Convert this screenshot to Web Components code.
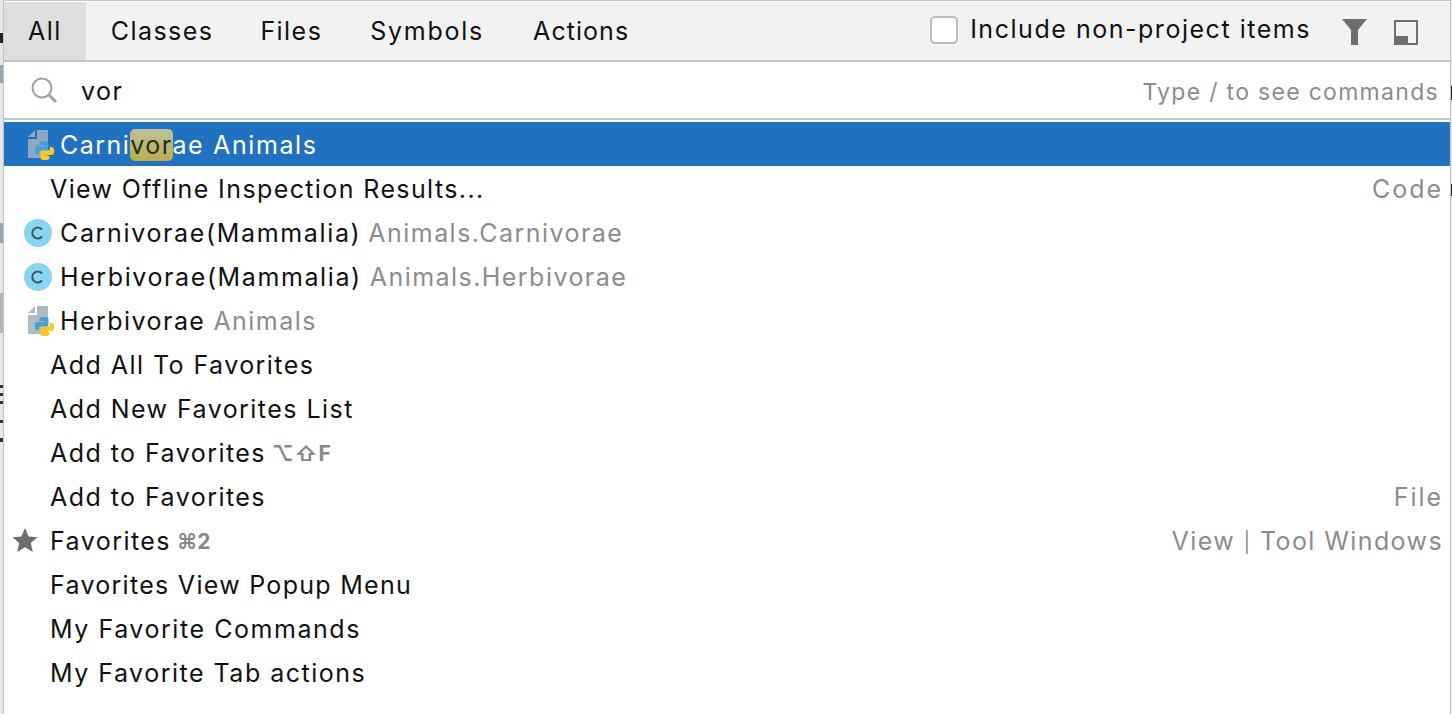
<!DOCTYPE html>
<html>
<head>
<meta charset="utf-8">
<style>
html, body { margin: 0; height: 100%; overflow: hidden; background: #e6e6e6; }
body { font-family: Inter, "Liberation Sans", sans-serif; }
</style>
</head>
<body>
<desk-backdrop></desk-backdrop>
<search-popup>
    <header-bar slot="head"></header-bar>
    <search-field slot="head"></search-field>
    <result-row selected icon="py"><b slot="name">Carni<mark-match>vor</mark-match>ae</b><span slot="hint" style="margin-left:9px;letter-spacing:1.6px">Animals</span></result-row>
    <result-row><b slot="name" style="letter-spacing:1.39px">View Offline Inspection Results...</b><span slot="side" style="letter-spacing:1.95px">Code</span></result-row>
    <result-row icon="class"><b slot="name" style="letter-spacing:1.65px">Carnivorae(Mammalia)</b><span slot="hint" style="margin-left:7px">Animals.Carnivorae</span></result-row>
    <result-row icon="class"><b slot="name" style="letter-spacing:1.6px">Herbivorae(Mammalia)</b><span slot="hint">Animals.Herbivorae</span></result-row>
    <result-row icon="py"><b slot="name">Herbivorae</b><span slot="hint">Animals</span></result-row>
    <result-row><b slot="name">Add All To Favorites</b></result-row>
    <result-row><b slot="name">Add New Favorites List</b></result-row>
    <result-row><b slot="name">Add to Favorites</b><span slot="keys" style="letter-spacing:1px">⌥⇧F</span></result-row>
    <result-row><b slot="name">Add to Favorites</b><span slot="side" style="letter-spacing:1.95px">File</span></result-row>
    <result-row icon="star"><b slot="name">Favorites</b><span slot="keys" style="letter-spacing:0">⌘2</span><span slot="side" style="letter-spacing:1.4px">View <span style="font-size:20px;position:relative;top:-1px">|</span> Tool Windows</span></result-row>
    <result-row><b slot="name" style="letter-spacing:1.29px">Favorites View Popup Menu</b></result-row>
    <result-row><b slot="name" style="letter-spacing:1.55px">My Favorite Commands</b></result-row>
    <result-row><b slot="name" style="letter-spacing:1.5px">My Favorite Tab actions</b></result-row>
</search-popup>

<script>
// what shows of the window behind the popup, along its two edges
class DeskBackdrop extends HTMLElement {
    constructor() {
        super();
        this.attachShadow({ mode: "open" });
        this.shadowRoot.innerHTML = `
        <style>
            :host { position: absolute; inset: 0; display: block; }
            i { position: absolute; display: block; }
        </style>
        <i style="left:0;top:33px;width:4px;height:10px;background:#222"></i>
        <i style="left:0;top:65px;width:4px;height:18px;background:#97a3ae"></i>
        <i style="left:0;top:223px;width:4px;height:20px;background:#97a3ae"></i>
        <i style="left:0;top:293px;width:4px;height:40px;background:#b5b5b5"></i>
        <i style="left:0;top:385px;width:4px;height:3px;background:#333"></i>
        <i style="left:0;top:393px;width:4px;height:3px;background:#333"></i>
        <i style="left:0;top:401px;width:4px;height:3px;background:#333"></i>
        <i style="left:0;top:420px;width:3px;height:3px;background:#333"></i>
        <i style="left:0;top:438px;width:4px;height:4px;background:#333"></i>
        <i style="left:1451px;top:86px;width:1px;height:14px;background:#222"></i>
        <i style="left:1451px;top:184px;width:1px;height:12px;background:#222"></i>
        `;
    }
}

class SearchPopup extends HTMLElement {
    constructor() {
        super();
        this.attachShadow({ mode: "open" });
        this.shadowRoot.innerHTML = `
        <style>
            :host {
                display: block;
                position: relative;
                height: 714px;
                box-sizing: border-box;
                margin-left: 3px;
                margin-right: 1px;
                padding-top: 1px;
                background: #fff;
                border-left: 1px solid #c4c4c4;
                border-right: 1px solid #c4c4c4;
                border-top: 1px solid #c4c4c4;
                font-size: 25px;
                letter-spacing: 1.45px;
                color: #111;
            }
            .list { display: flex; flex-direction: column; }
        </style>
        <slot name="head"></slot>
        <div class="list"><slot></slot></div>
        `;
    }
}

class HeaderBar extends HTMLElement {
    constructor() {
        super();
        this.attachShadow({ mode: "open" });
        this.shadowRoot.innerHTML = `
        <style>
            :host {
                display: flex;
                align-items: center;
                height: 58px;
                background: #f2f2f2;
                border-bottom: 2px solid #c4c4c4;
            }
            .tab { height: 100%; display: flex; align-items: center; padding: 0 24px; }
            .tab.on { background: #dedede; }
            .tab.cls { padding: 0 23px 0 25px; }
            .tab.sym { letter-spacing: 1.75px; padding-right: 25px; }
            .tab.act { letter-spacing: 1.05px; }
            .right { margin-left: auto; display: flex; align-items: center; margin-right: 32px; }
            .check {
                width: 28px; height: 28px; box-sizing: border-box;
                background: #fff; border: 2px solid #bcbcbc; border-radius: 5px;
                margin: 0 12px 2px 0;
            }
            .label { margin-bottom: 4px; letter-spacing: 1.53px; }
            svg { display: block; }
            .filter { margin: 2px 0 0 31px; }
            .layout { margin: 2px 0 0 27px; }
        </style>
        <div class="tab on">All</div>
        <div class="tab cls">Classes</div>
        <div class="tab">Files</div>
        <div class="tab sym">Symbols</div>
        <div class="tab act">Actions</div>
        <div class="right">
            <div class="check"></div>
            <div class="label">Include non-project items</div>
            <svg class="filter" width="25" height="26" viewBox="0 0 25 26"><path d="M0 0H25L16 11V26H9V11Z" fill="#6e6e6e"/></svg>
            <svg class="layout" width="24" height="25" viewBox="0 0 24 25"><path d="M1 1H23V24H1Z" fill="none" stroke="#6e6e6e" stroke-width="2"/><path d="M1 16H14V24H1Z" fill="#6e6e6e"/></svg>
        </div>
        `;
    }
}

class SearchField extends HTMLElement {
    constructor() {
        super();
        this.attachShadow({ mode: "open" });
        this.shadowRoot.innerHTML = `
        <style>
            :host {
                display: flex;
                align-items: center;
                height: 56px;
                padding-left: 27px;
                padding-right: 11px;
                border-bottom: 2px solid #c4c4c4;
                margin-bottom: 2px;
            }
            svg { display: block; margin-right: 24px; }
            .q { padding-top: 2px; }
            .hint { margin-left: auto; color: #8c8c8c; font-size: 23px; letter-spacing: 1.3px; padding-top: 3px; }
        </style>
        <svg width="26" height="26" viewBox="0 0 26 26" fill="none" stroke="#96a3ab" stroke-width="2"><circle cx="11" cy="11" r="9.500"/><path d="M18 18L25 25" stroke-width="3"/></svg>
        <div class="q">vor</div>
        <div class="hint">Type / to see commands</div>
        `;
    }
}

class MarkMatch extends HTMLElement {
    constructor() {
        super();
        this.attachShadow({ mode: "open" });
        this.shadowRoot.innerHTML = `<style>
            :host {
                display: inline-block;
                color: #2b2b20;
                background: linear-gradient(#bfc19a, #b9ad4e);
                border-radius: 5px;
                line-height: 32px;
            }
        </style><slot></slot>`;
    }
}

const SNAKE = "M14.500 11H19Q21.500 11 21.500 13.500V18.500Q21.500 20 20 20.500H14Q12 20.500 12 22.500V24H10.500Q8 24 8 21V18.500Q8 16 10.500 16H17V15H12.500V13.500Q12.500 11 14.500 11Z";

function pyIcon(page) {
    return `<svg width="30" height="30" viewBox="0 0 30 30" style="margin:0 3px">
        <path d="M1 7L8 0V7Z" fill="${page}"/>
        <path d="M10 0H21V28H1V9H10Z" fill="${page}"/>
        <path d="${SNAKE}" fill="#45a0da"/>
        <path d="${SNAKE}" fill="#f9c91d" transform="rotate(180 17.500 20.500)"/>
    </svg>`;
}

const ICONS = {
    class: `<svg width="28" height="28" viewBox="0 0 28 28" style="margin-right:8px"><circle cx="14" cy="14" r="14" fill="#87d5f2"/><path d="M18 10.500A5.500 5.500 0 1 0 18 17.500" fill="none" stroke="#3f5763" stroke-width="2"/></svg>`,
    star: `<svg width="26" height="26" viewBox="0 0 26 26" style="margin:-3px 12px 0 -12px"><path d="M13 1L16.600 9.500L25.500 10.200L18.800 16L20.800 25L13 20.300L5.200 25L7.200 16L.5 10.200L9.400 9.500Z" fill="#6e6e6e"/></svg>`
};

class ResultRow extends HTMLElement {
    constructor() {
        super();
        this.attachShadow({ mode: "open" });
        const icon = this.getAttribute("icon");
        let art = "";
        if (icon == "py") art = pyIcon(this.hasAttribute("selected") ? "#8ea7c4" : "#b0bac3");
        else if (icon) art = ICONS[icon];
        this.shadowRoot.innerHTML = `
        <style>
            :host {
                display: flex;
                align-items: center;
                height: 44px;
                box-sizing: border-box;
                padding: 2px 7px 0 46px;
                white-space: nowrap;
            }
            :host([icon]) { padding-left: 20px; }
            :host([selected]) { background: #2171c1; color: #fff; }
            ::slotted(b) { font-weight: 400; }
            ::slotted([slot="hint"]) { color: #8c8c8c; margin-left: 8px; }
            :host([selected]) ::slotted([slot="hint"]) { color: #fff; }
            ::slotted([slot="keys"]) { color: #888; font-size: 21px; font-weight: 700; margin-left: 6px; }
            ::slotted([slot="side"]) { color: #8c8c8c; margin-left: auto; }
            svg { display: block; flex: none; }
            .ic { display: flex; }
        </style>
        <div class="ic">${art}</div>
        <slot name="name"></slot>
        <slot name="keys"></slot>
        <slot name="hint"></slot>
        <slot name="side"></slot>
        `;
    }
}

customElements.define("desk-backdrop", DeskBackdrop);
customElements.define("search-popup", SearchPopup);
customElements.define("header-bar", HeaderBar);
customElements.define("search-field", SearchField);
customElements.define("mark-match", MarkMatch);
customElements.define("result-row", ResultRow);
</script>
</body>
</html>
